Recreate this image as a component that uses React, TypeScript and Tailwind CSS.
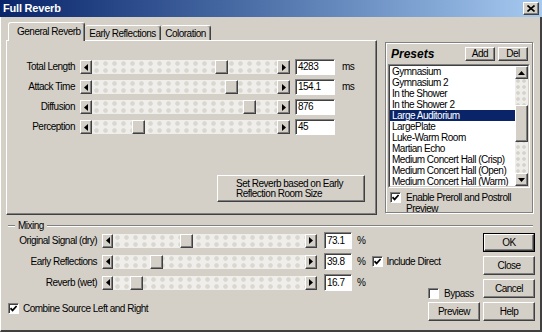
import React from 'react';

const RAISED =
  'border border-t-white border-l-white border-r-[#404040] border-b-[#404040] shadow-[inset_-1px_-1px_0_#808080] bg-[#d4d0c8]';
const SUNKEN =
  'border border-t-[#808080] border-l-[#808080] border-r-white border-b-white shadow-[inset_1px_1px_0_#404040]';
const TRACK =
  'relative h-full bg-[#efeeea] bg-[radial-gradient(circle,#d9d7d0_1.8px,transparent_2.8px)] bg-[length:9px_7px]';

const PRESETS = [
  'Gymnasium',
  'Gymnasium 2',
  'In the Shower',
  'In the Shower 2',
  'Large Auditorium',
  'LargePlate',
  'Luke-Warm Room',
  'Martian Echo',
  'Medium Concert Hall (Crisp)',
  'Medium Concert Hall (Open)',
  'Medium Concert Hall (Warm)',
];

function Tri({ dir }: { dir: 'left' | 'right' | 'up' | 'down' }) {
  if (dir === 'left' || dir === 'right') {
    return (
      <svg width="4" height="7" viewBox="0 0 4 7">
        <path d={dir === 'left' ? 'M4 0L0 3.5L4 7Z' : 'M0 0L4 3.5L0 7Z'} fill="black" />
      </svg>
    );
  }
  return (
    <svg width="7" height="4" viewBox="0 0 7 4">
      <path d={dir === 'up' ? 'M0 4L3.5 0L7 4Z' : 'M0 0L7 0L3.5 4Z'} fill="black" />
    </svg>
  );
}

function Slider({ track, thumb, btnL, btnR }: { track: string; thumb: number; btnL: string; btnR: string }) {
  return (
    <div className="flex h-[14px] shrink-0">
      <div className={`${RAISED} ${btnL} flex items-center justify-center`}>
        <Tri dir="left" />
      </div>
      <div className={`${TRACK} ${track}`}>
        <div className={`${RAISED} absolute top-0 h-full w-[13px]`} style={{ left: thumb }} />
      </div>
      <div className={`${RAISED} ${btnR} flex items-center justify-center`}>
        <Tri dir="right" />
      </div>
    </div>
  );
}

function Check({ on }: { on?: boolean }) {
  return (
    <div className={`${SUNKEN} w-[11px] h-[11px] bg-white flex items-center justify-center shrink-0`}>
      {on && (
        <svg width="7" height="7" viewBox="0 0 7 7">
          <path d="M0.5 3.2L2.6 5.4L6.6 1" stroke="black" strokeWidth="1.7" fill="none" />
        </svg>
      )}
    </div>
  );
}

function Btn({ children, className = '' }: { children: React.ReactNode; className?: string }) {
  return (
    <div className={`${RAISED} flex items-center justify-center ${className}`}>{children}</div>
  );
}

function ReverbRow({ label, thumb, value, unit }: { label: string; thumb: number; value: string; unit?: string }) {
  return (
    <div className="flex items-center h-[20px]">
      <span className="w-[68px] text-right leading-none">{label}</span>
      <div className="ml-[5px]">
        <Slider track="w-[185px]" thumb={thumb} btnL="w-[12px]" btnR="w-[13px]" />
      </div>
      <div className={`${SUNKEN} ml-[5px] w-[40px] h-[16px] bg-white pl-[2px] leading-[14px]`}>{value}</div>
      {unit && <span className="ml-[7px] leading-none">{unit}</span>}
    </div>
  );
}

function MixRow({ label, thumb, value, include }: { label: string; thumb: number; value: string; include?: boolean }) {
  return (
    <div className="flex items-center h-[21px] whitespace-nowrap">
      <span className="w-[96px] shrink-0 text-right leading-none">{label}</span>
      <div className="ml-[5px]">
        <Slider track="w-[192px]" thumb={thumb} btnL="w-[11px]" btnR="w-[12px]" />
      </div>
      <div className={`${SUNKEN} ml-[7px] w-[28px] h-[17px] shrink-0 bg-white pl-[2px] leading-[15px]`}>{value}</div>
      <span className="ml-[5px] leading-none">%</span>
      {include && (
        <>
          <div className="ml-[7px]">
            <Check on />
          </div>
          <span className="ml-[3px] leading-none">Include Direct</span>
        </>
      )}
    </div>
  );
}

export default function App() {
  return (
    <div className="w-[542px] h-[332px] flex flex-col overflow-hidden bg-[#d4d0c8] text-black font-['Liberation_Sans',Arial,sans-serif] text-[10px] tracking-[-0.5px]">
      {/* Title bar */}
      <div className="h-[17px] shrink-0 flex items-center justify-between px-[3px] bg-linear-to-r from-[#0a246a] to-[#a6caf0]">
        <span className="text-white font-bold text-[11px] tracking-[-0.2px] leading-none">Full Reverb</span>
        <div className={`${RAISED} w-[16px] h-[13px] flex items-center justify-center`}>
          <svg width="8" height="7" viewBox="0 0 8 7">
            <path d="M0.5 0.5L7.5 6.5M7.5 0.5L0.5 6.5" stroke="black" strokeWidth="1.6" />
          </svg>
        </div>
      </div>

      {/* Body */}
      <div className="flex-1 flex flex-col border-l border-l-white border-r-2 border-r-[#404040] border-b-2 border-b-[#404040]">
        <div className="flex mt-[5px] pl-[5px]">
          {/* Tabs */}
          <div className="w-[371px] flex flex-col">
            <div className="h-[18px] flex items-end pl-[2px]">
              <div className="relative z-10 mb-[-1px] h-[19px] w-[77px] flex items-center pl-[8px] pb-[1px] bg-[#d4d0c8] rounded-t-[3px] border-t border-l border-r border-t-white border-l-white border-r-[#404040] shadow-[inset_-1px_0_0_#808080]">
                General Reverb
              </div>
              <div className="h-[15px] w-[76px] flex items-center justify-center rounded-t-[3px] border-t border-r border-t-white border-r-[#404040] shadow-[inset_-1px_0_0_#808080]">
                Early Reflections
              </div>
              <div className="h-[15px] w-[50px] flex items-center justify-center rounded-t-[3px] border-t border-r border-t-white border-r-[#404040] shadow-[inset_-1px_0_0_#808080]">
                Coloration
              </div>
            </div>
            <div className="h-[175px] flex flex-col pt-[16px] border border-t-white border-l-white border-r-[#404040] border-b-[#404040] shadow-[inset_-1px_-1px_0_#808080]">
              <ReverbRow label="Total Length" thumb={123} value="4283" unit="ms" />
              <ReverbRow label="Attack Time" thumb={133} value="154.1" unit="ms" />
              <ReverbRow label="Diffusion" thumb={151} value="876" />
              <ReverbRow label="Perception" thumb={40} value="45" />
              <div className={`${RAISED} self-end mr-[11px] mt-[38px] w-[148px] h-[27px] flex flex-col justify-center pl-[18px] leading-[10px]`}>
                <span>Set Reverb based on Early</span>
                <span>Reflection Room Size</span>
              </div>
            </div>
          </div>

          {/* Presets */}
          <div className="ml-[8px] mt-[20px] w-[148px] h-[171px] flex flex-col px-[2px] border border-[#808080] shadow-[inset_1px_1px_0_#fff,1px_1px_0_#fff]">
            <div className="mt-[4px] h-[14px] flex items-center">
              <span className="ml-[3px] font-bold italic text-[12px] tracking-normal leading-none">Presets</span>
              <div className="ml-auto mr-[2px] flex gap-[3px]">
                <Btn className="w-[30px] h-[14px] leading-none">Add</Btn>
                <Btn className="w-[30px] h-[14px] leading-none">Del</Btn>
              </div>
            </div>
            <div className="mt-[3px] h-[124px] border border-t-[#808080] border-l-[#808080] border-r-white border-b-white">
              <div className="h-full flex overflow-hidden bg-white border border-t-[#404040] border-l-[#404040] border-r-[#d4d0c8] border-b-[#d4d0c8]">
                <div className="flex-1 flex flex-col overflow-hidden">
                  {PRESETS.map((p) => (
                    <div
                      key={p}
                      className={`h-[11px] shrink-0 leading-[11px] pl-[2px] whitespace-nowrap ${
                        p === 'Large Auditorium' ? 'bg-[#0a246a] text-white' : ''
                      }`}
                    >
                      {p}
                    </div>
                  ))}
                </div>
                <div className="w-[13px] flex flex-col bg-[#eeede9] bg-[radial-gradient(circle,#d4d2ca_1.4px,transparent_2.2px)] bg-[length:6px_6px]">
                  <Btn className="h-[13px] shrink-0">
                    <Tri dir="up" />
                  </Btn>
                  <div className="h-[26px] shrink-0" />
                  <div className={`${RAISED} h-[37px] shrink-0`} />
                  <div className="flex-1" />
                  <Btn className="h-[13px] shrink-0">
                    <Tri dir="down" />
                  </Btn>
                </div>
              </div>
            </div>
            <div className="mt-[4px] flex items-start">
              <div className="ml-[2px]">
                <Check on />
              </div>
              <span className="ml-[5px] leading-[11px]">
                Enable Preroll and Postroll
                <br />
                Preview
              </span>
            </div>
          </div>
        </div>

        {/* Mixing separator */}
        <div className="mt-[6px] h-[9px] flex items-center">
          <div className="ml-[7px] w-[7px] h-[2px] border-t border-t-[#808080] border-b border-b-white" />
          <span className="mx-[3px] leading-none">Mixing</span>
          <div className="flex-1 mr-[7px] h-[2px] border-t border-t-[#808080] border-b border-b-white" />
        </div>

        {/* Mixing controls and dialog buttons */}
        <div className="flex">
          <div className="w-[427px] shrink-0 flex flex-col">
            <MixRow label="Original Signal (dry)" thumb={67} value="73.1" />
            <MixRow label="Early Reflections" thumb={37} value="39.8" include />
            <MixRow label="Reverb (wet)" thumb={17} value="16.7" />
            <div className="mt-[10px] ml-[7px] flex items-center">
              <Check on />
              <span className="ml-[4px] leading-none">Combine Source Left and Right</span>
            </div>
          </div>
          <div className="w-[52px] shrink-0 flex flex-col pt-[58px]">
            <div className="h-[11px] flex items-center">
              <Check />
              <span className="ml-[5px] leading-none">Bypass</span>
            </div>
            <Btn className="mt-[3px] h-[19px]">Preview</Btn>
          </div>
          <div className="ml-[3px] w-[52px] shrink-0 flex flex-col gap-[4px] pt-[3px]">
            <div className="h-[19px] border border-black">
              <Btn className="h-full">OK</Btn>
            </div>
            <Btn className="h-[19px]">Close</Btn>
            <Btn className="h-[19px]">Cancel</Btn>
            <Btn className="h-[19px]">Help</Btn>
          </div>
        </div>
      </div>
    </div>
  );
}
